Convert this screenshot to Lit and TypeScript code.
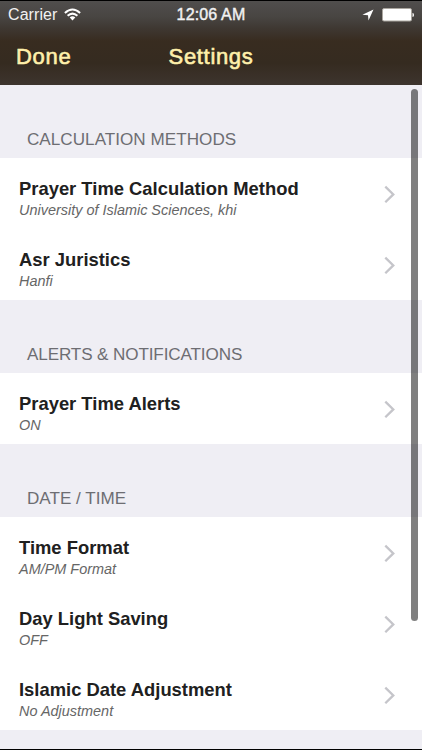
import { LitElement, html, css } from "lit";
import { customElement, property } from "lit/decorators.js";

interface Item { title: string; value: string }
interface Section { heading: string; tracking: number; items: Item[] }

const SECTIONS: Section[] = [
  { heading: "CALCULATION METHODS", tracking: 0.03, items: [
    { title: "Prayer Time Calculation Method", value: "University of Islamic Sciences, khi" },
    { title: "Asr Juristics", value: "Hanfi" },
  ] },
  { heading: "ALERTS & NOTIFICATIONS", tracking: -0.12, items: [
    { title: "Prayer Time Alerts", value: "ON" },
  ] },
  { heading: "DATE / TIME", tracking: 0, items: [
    { title: "Time Format", value: "AM/PM Format" },
    { title: "Day Light Saving", value: "OFF" },
    { title: "Islamic Date Adjustment", value: "No Adjustment" },
  ] },
];

@customElement("settings-row")
class SettingsRow extends LitElement {
  @property({ attribute: false }) item!: Item;
  static styles = css`
    :host { display: flex; box-sizing: border-box; height: 71px; padding: 19px 27px 0 19px; background: #fff; justify-content: space-between; }
    .title { font-size: 18.4px; line-height: 24px; font-weight: 700; color: #202020; white-space: nowrap; }
    .value { font-size: 14.45px; line-height: 18px; font-style: italic; color: #666; white-space: nowrap; }
    .chevron { display: block; margin-top: 8px; }
  `;
  render() {
    return html`
      <div>
        <div class="title">${this.item.title}</div>
        <div class="value">${this.item.value}</div>
      </div>
      <svg class="chevron" width="11" height="19" viewBox="0 0 11 19">
        <path d="M1.3 1.6 L9.3 9.4 L1.3 17.2" fill="none" stroke="#c5c5ca" stroke-width="2.3" />
      </svg>`;
  }
}

@customElement("app-root")
class AppRoot extends LitElement {
  static styles = css`
    :host { display: flex; flex-direction: column; box-sizing: border-box; position: relative; width: 422px; height: 750px; overflow: hidden;
      border-top: 1px solid #000; border-bottom: 1px solid #000; background: #efeef4;
      font-family: "Liberation Sans", Arial, sans-serif; }
    header { flex: none; height: 84px; background: linear-gradient(#504e4d 0, #484542 16px, #3e3731 28px, #382c20 40px, #352b20 62px, #3d342e 84px); }
    .status { display: grid; grid-template-columns: 1fr auto 1fr; height: 28px; align-items: center; padding: 0 8px; color: #f2f2f2; font-size: 16px; }
    .carrier { display: flex; align-items: center; gap: 7px; letter-spacing: 0.08px; }
    .wifi { margin-top: -1px; }
    .clock { font-size: 16px; letter-spacing: 0.15px; -webkit-text-stroke: 0.4px #f2f2f2; }
    .indicators { display: flex; justify-content: flex-end; align-items: center; gap: 8px; }
    svg { display: block; }
    .nav { display: grid; grid-template-columns: 1fr auto 1fr; align-items: center; height: 56px; padding: 0 16px; color: #fff0ab; font-size: 22px; -webkit-text-stroke: 0.6px #fff0ab; }
    .done { letter-spacing: 0.7px; }
    .heading { letter-spacing: 0.68px; }
    .section-title { box-sizing: border-box; height: 73px; padding: 44px 0 0 27px; font-size: 17.1px; line-height: 22px; color: #6d6d72; white-space: nowrap; }
    .scrollbar { position: absolute; right: 4px; top: 88px; width: 7px; height: 532px; border-radius: 4px; background: rgba(0, 0, 0, 0.5); }
  `;
  render() {
    return html`
      <header>
        <div class="status">
          <div class="carrier"><span>Carrier</span>
            <svg class="wifi" width="17" height="13" viewBox="0 0 17 13">
              <path d="M.9 5 Q8.5 -1.9 16.1 5 M3.6 7.8 Q8.5 3.4 13.4 7.8" fill="none" stroke="#fff" stroke-width="2" />
              <path d="M5.7 9.5 Q8.5 7.1 11.3 9.5 L8.5 12.4 Z" fill="#fff" />
            </svg>
          </div>
          <span class="clock">12:06 AM</span>
          <div class="indicators">
            <svg width="12" height="12" viewBox="0 0 12 12"><path d="M11.5 .4 L6.5 11.5 L6 6.2 L.4 5.7 Z" fill="#fff" /></svg>
            <svg width="32" height="14" viewBox="0 0 32 14">
              <rect x=".5" y=".5" width="29" height="12.5" rx="1.5" fill="#fff" stroke="#aaa69f" />
              <path d="M30.5 4.8 Q32 5 32 6.9 Q32 8.8 30.5 9 Z" fill="#fff" />
            </svg>
          </div>
        </div>
        <div class="nav"><span class="done">Done</span><span class="heading">Settings</span><span></span></div>
      </header>
      ${SECTIONS.map((s) => html`
        <section>
          <div class="section-title" style="letter-spacing:${s.tracking}px">${s.heading}</div>
          ${s.items.map((i) => html`<settings-row .item=${i}></settings-row>`)}
        </section>`)}
      <div class="scrollbar"></div>`;
  }
}
